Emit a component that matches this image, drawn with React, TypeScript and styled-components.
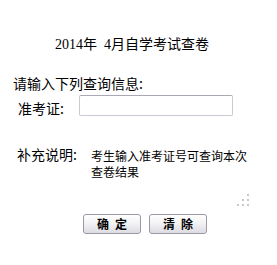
import React from "react";
import styled, { createGlobalStyle } from "styled-components";

const Global = createGlobalStyle`
  html, body { margin: 0; padding: 0; background: #fff; }
  body { font-family: "Liberation Serif", "Noto Sans CJK SC", serif; color: #000; }
`;

const Page = styled.div`
  width: 277px;
  height: 265px;
  box-sizing: border-box;
  padding-top: 37px;
  display: flex;
  flex-direction: column;
`;

const Title = styled.div`
  font-size: 14px;
  line-height: 16px;
  padding-left: 55px;
  white-space: pre;
`;

const Prompt = styled.div`
  font-family: "Noto Sans CJK SC", sans-serif;
  font-size: 14px;
  line-height: 16px;
  margin-top: 22px;
  padding-left: 13px;
`;

const Row = styled.div<{ $top: number; $left: number }>`
  display: flex;
  align-items: flex-start;
  margin-top: ${(p) => p.$top}px;
  padding-left: ${(p) => p.$left}px;
`;

const Label = styled.span<{ $width: number; $shift?: number }>`
  font-family: "Noto Sans CJK SC", sans-serif;
  font-size: 14px;
  line-height: 16px;
  width: ${(p) => p.$width}px;
  flex: none;
  padding-top: ${(p) => p.$shift ?? 0}px;
`;

const Input = styled.input`
  box-sizing: border-box;
  width: 154px;
  height: 21px;
  margin: 0;
  padding: 0 3px;
  border: 1px solid #c9c9d1;
  border-top-color: #a9a9b3;
  border-radius: 2px;
  background: #fff;
  outline: none;
`;

const Desc = styled.div`
  font-family: "Noto Sans CJK SC", sans-serif;
  font-size: 12px;
  line-height: 16px;
  width: 160px;
  margin-top: 2px;
`;

const GripRow = styled.div`
  display: flex;
  justify-content: flex-end;
  padding-right: 28px;
  margin-top: 14px;
`;

const Grip = styled.svg`
  display: block;
`;

const Buttons = styled.div`
  display: flex;
  gap: 8px;
  padding-left: 83px;
  margin-top: 8px;
`;

const Button = styled.button`
  box-sizing: border-box;
  width: 58px;
  height: 20px;
  margin: 0;
  padding: 0;
  border: 1px solid #9a9aa6;
  border-radius: 3px;
  background: linear-gradient(#ffffff 0%, #f3f3f5 45%, #dcdce2 100%);
  font-family: "Noto Sans CJK SC", sans-serif;
  font-size: 12px;
  font-weight: bold;
  line-height: 18px;
  color: #000;
  letter-spacing: 6px;
  text-indent: 6px;
`;

export default function App() {
  return (
    <>
      <Global />
      <Page>
        <Title>{"2014年  4月自学考试查卷"}</Title>
        <Prompt>请输入下列查询信息:</Prompt>
        <Row $top={4} $left={18}>
          <Label $width={61} $shift={5}>准考证:</Label>
          <Input type="text" />
        </Row>
        <Row $top={30} $left={17}>
          <Label $width={74}>补充说明:</Label>
          <Desc>考生输入准考证号可查询本次查卷结果</Desc>
        </Row>
        <GripRow>
          <Grip width="12" height="12" viewBox="0 0 12 12">
            <g fill="#c8c8c8">
              <rect x="10" y="0" width="2" height="2" />
              <rect x="5" y="5" width="2" height="2" />
              <rect x="10" y="5" width="2" height="2" />
              <rect x="0" y="10" width="2" height="2" />
              <rect x="5" y="10" width="2" height="2" />
              <rect x="10" y="10" width="2" height="2" />
            </g>
          </Grip>
        </GripRow>
        <Buttons>
          <Button>确定</Button>
          <Button>清除</Button>
        </Buttons>
      </Page>
    </>
  );
}
